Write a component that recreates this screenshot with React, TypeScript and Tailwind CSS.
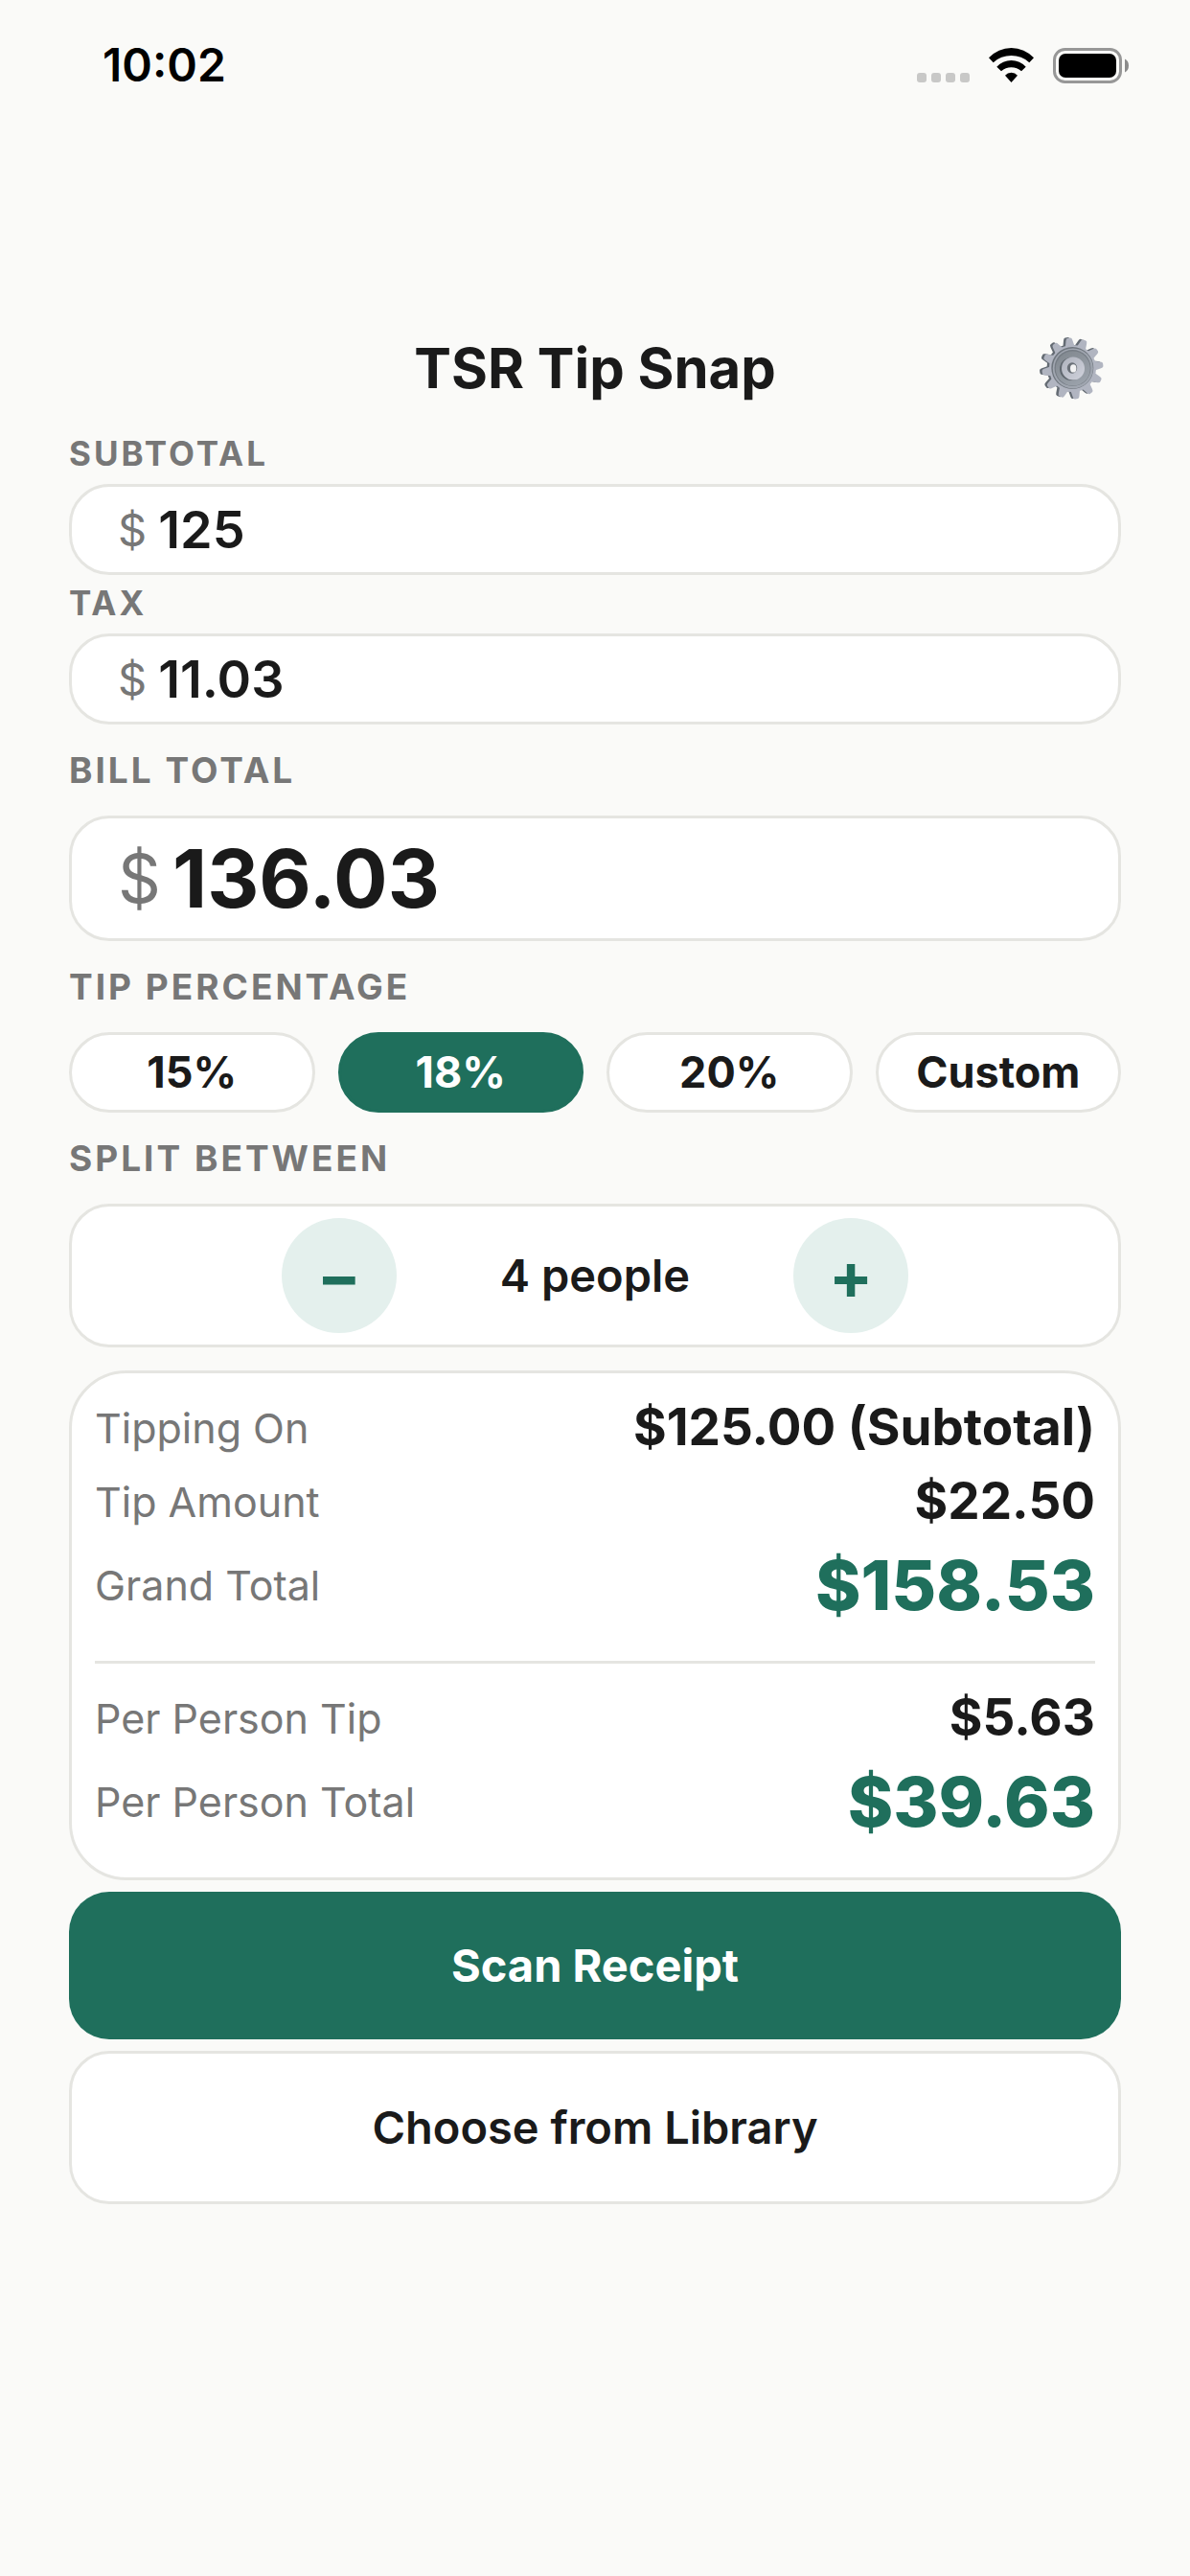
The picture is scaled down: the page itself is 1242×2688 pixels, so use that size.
import { useState } from "react";

const TIP_OPTIONS = ["15%", "18%", "20%", "Custom"];
const TEETH = [0, 30, 60, 90, 120, 150, 180, 210, 240, 270, 300, 330];

const money = (n: number) => `$${n.toFixed(2)}`;

function GearTeeth({ cx, cy, fill }: { cx: number; cy: number; fill: string }) {
  return (
    <g fill={fill}>
      {TEETH.map((deg) => (
        <path
          key={deg}
          transform={`translate(${cx} ${cy}) rotate(${deg - 7})`}
          d="M22 -5 L29.5 -3.4 Q32 -3 32 -1.4 V1.4 Q32 3 29.5 3.4 L22 5 Z"
        />
      ))}
      <circle cx={cx} cy={cy} r="24.5" />
    </g>
  );
}

function GearIcon() {
  return (
    <svg viewBox="0 0 68 68" className="size-[68px]" aria-hidden="true">
      <defs>
        <linearGradient id="gearDish" x1="0" y1="0" x2="0.6" y2="1">
          <stop offset="0" stopColor="#7f868d" />
          <stop offset="1" stopColor="#9aa1aa" />
        </linearGradient>
        <linearGradient id="gearHub" x1="0" y1="0" x2="1" y2="1">
          <stop offset="0" stopColor="#aeb2bd" />
          <stop offset="1" stopColor="#d0d2dc" />
        </linearGradient>
      </defs>
      <GearTeeth cx={33} cy={34} fill="#646b73" />
      <GearTeeth cx={35.5} cy={34.5} fill="#b1b5c1" />
      <circle cx="35.3" cy="34" r="22" fill="#6f767e" />
      <circle cx="35.8" cy="34.4" r="21" fill="#a0a6b0" />
      <circle cx="35.5" cy="34" r="19" fill="#757c84" />
      <circle cx="35.8" cy="34.5" r="18" fill="url(#gearDish)" />
      <circle cx="34" cy="35" r="12" fill="#5f666e" />
      <circle cx="36" cy="34.5" r="12" fill="url(#gearHub)" />
      <ellipse cx="35" cy="34" rx="5.2" ry="5.8" fill="#6a7078" />
      <ellipse cx="36.2" cy="34.4" rx="3.2" ry="4.2" fill="#f3f3f4" />
    </svg>
  );
}

function StatusBar() {
  return (
    <div className="flex h-[136px] items-center justify-between pl-[107px] pr-16">
      <span className="text-[48px] leading-[58px] font-semibold text-black">10:02</span>
      <div className="flex gap-5">
        <svg viewBox="0 0 55 37" className="h-[37px] w-[55px]" fill="#c8c8c7">
          <rect x="0" y="26" width="10" height="10" rx="3" />
          <rect x="15" y="26" width="10" height="10" rx="3" />
          <rect x="30" y="26" width="10" height="10" rx="3" />
          <rect x="45" y="26" width="10" height="10" rx="3" />
        </svg>
        <svg viewBox="0 0 47 37" className="h-[37px] w-[47px]" fill="#000">
          <path d="M0 10.3 A32 32 0 0 1 47 10.3 L42.3 15.3 A27.8 27.8 0 0 0 4.7 15.3 Z" />
          <path d="M8.3 19.7 A20.6 20.6 0 0 1 38.7 19.7 L34 24.3 A15.8 15.8 0 0 0 13 24.3 Z" />
          <path d="M17 28.7 A8.5 8.5 0 0 1 30 28.7 L23.5 36 Z" />
        </svg>
        <svg viewBox="0 0 79 37" className="h-[37px] w-[79px]">
          <rect x="1.5" y="1.5" width="69" height="34" rx="11" fill="none" stroke="#979797" strokeWidth="3" />
          <rect x="6" y="6" width="60" height="25" rx="7" fill="#000" />
          <path d="M75 11.5 Q79 13.5 79 18.5 Q79 23.5 75 25.5 Z" fill="#8b8b8b" />
        </svg>
      </div>
    </div>
  );
}

function SmallField({ id, value, onChange }: { id: string; value: string; onChange: (v: string) => void }) {
  return (
    <div className="flex items-center gap-3 rounded-[42px] border-3 border-[#e5e5e1] bg-white px-12 py-3">
      <span className="text-[47px] leading-[65px] text-[#777777]">$</span>
      <input
        id={id}
        type="text"
        inputMode="decimal"
        value={value}
        onChange={(e) => onChange(e.target.value)}
        className="h-[65px] w-full min-w-0 bg-transparent text-[54px] leading-[65px] font-semibold outline-none"
      />
    </div>
  );
}

function Row({ label, value, big }: { label: string; value: string; big?: boolean }) {
  return (
    <div className="mb-3 flex items-center justify-between">
      <dt className="text-[43px] leading-[54px] text-[#777777]">{label}</dt>
      {big ? (
        <dd className="text-[72px] leading-[86px] font-extrabold text-[#1f6f5c]">{value}</dd>
      ) : (
        <dd className="text-[53px] leading-[65px] font-bold">{value}</dd>
      )}
    </div>
  );
}

export default function App() {
  const [subtotal, setSubtotal] = useState("125");
  const [tax, setTax] = useState("11.03");
  const [total, setTotal] = useState("136.03");
  const [tip, setTip] = useState("18%");
  const [people, setPeople] = useState(4);

  const base = parseFloat(subtotal) || 0;
  const bill = parseFloat(total) || 0;
  const tipAmount = (base * (parseFloat(tip) || 0)) / 100;
  const grand = bill + tipAmount;

  const updateParts = (sub: string, tx: string) => {
    setSubtotal(sub);
    setTax(tx);
    setTotal(((parseFloat(sub) || 0) + (parseFloat(tx) || 0)).toFixed(2));
  };

  const smallLabel = "mt-2 mb-[10px] text-[35px] leading-[43px] font-bold tracking-[3px] text-[#777777]";
  const sectionLabel = "my-6 text-[37px] leading-[47px] font-bold tracking-[3px] text-[#777777]";
  const stepper =
    "flex size-[120px] items-center justify-center rounded-full bg-[#e4f0ed] text-[68px] leading-[72px] font-bold text-[#1f6f5c]";

  return (
    <div className="min-h-screen bg-[#fafaf8] font-['Inter',sans-serif] text-[#1a1a1a]">
      <StatusBar />

      <main className="flex flex-col px-[72px] pt-[212px] pb-16">
        <header className="mb-6 grid grid-cols-[104px_1fr_104px] items-center">
          <h1 className="col-start-2 text-center text-[58px] leading-[72px] font-bold">TSR Tip Snap</h1>
          <button type="button" aria-label="Settings" className="flex justify-center">
            <GearIcon />
          </button>
        </header>

        <label htmlFor="subtotal" className={smallLabel}>SUBTOTAL</label>
        <SmallField id="subtotal" value={subtotal} onChange={(v) => updateParts(v, tax)} />
        <label htmlFor="tax" className={smallLabel}>TAX</label>
        <SmallField id="tax" value={tax} onChange={(v) => updateParts(subtotal, v)} />

        <label htmlFor="total" className={sectionLabel}>BILL TOTAL</label>
        <div className="flex items-center gap-3 rounded-[42px] border-3 border-[#e5e5e1] bg-white px-12 py-3">
          <span className="text-[70px] leading-[101px] text-[#777777]">$</span>
          <input
            id="total"
            type="text"
            inputMode="decimal"
            value={total}
            onChange={(e) => setTotal(e.target.value)}
            className="h-[101px] w-full min-w-0 bg-transparent text-[84px] leading-[101px] font-bold outline-none"
          />
        </div>

        <h2 className={sectionLabel}>TIP PERCENTAGE</h2>
        <div className="grid grid-cols-4 gap-6">
          {TIP_OPTIONS.map((option) => (
            <button
              key={option}
              type="button"
              aria-pressed={option === tip}
              onClick={() => setTip(option)}
              className={`rounded-[42px] border-3 py-3 text-[45px] leading-[54px] font-bold ${
                option === tip ? "border-[#1f6f5c] bg-[#1f6f5c] text-white" : "border-[#e5e5e1] bg-white"
              }`}
            >
              {option}
            </button>
          ))}
        </div>

        <h2 className={sectionLabel}>SPLIT BETWEEN</h2>
        <div className="flex items-center justify-center gap-[108px] rounded-[42px] border-3 border-[#e5e5e1] bg-white py-3">
          <button type="button" aria-label="Remove person" className={stepper} onClick={() => setPeople(Math.max(1, people - 1))}>
            −
          </button>
          <span className="text-[47px] leading-[58px] font-semibold">{people} people</span>
          <button type="button" aria-label="Add person" className={stepper} onClick={() => setPeople(people + 1)}>
            +
          </button>
        </div>

        {/* Results */}
        <dl className="mt-6 flex flex-col rounded-[60px] border-3 border-[#e5e5e1] bg-white p-6">
          <Row label="Tipping On" value={`${money(base)} (Subtotal)`} />
          <Row label="Tip Amount" value={money(tipAmount)} />
          <Row label="Grand Total" value={money(grand)} big />
          <div className="my-6 h-[3px] bg-[#e5e5e1]" />
          <Row label="Per Person Tip" value={money(tipAmount / people)} />
          <Row label="Per Person Total" value={money(grand / people)} big />
        </dl>

        <button type="button" className="mt-3 rounded-[42px] bg-[#1f6f5c] py-12 text-[47px] leading-[58px] font-bold text-white">
          Scan Receipt
        </button>
        <button type="button" className="mt-3 rounded-[42px] border-3 border-[#e5e5e1] bg-white py-12 text-[47px] leading-[58px] font-semibold">
          Choose from Library
        </button>
      </main>
    </div>
  );
}
